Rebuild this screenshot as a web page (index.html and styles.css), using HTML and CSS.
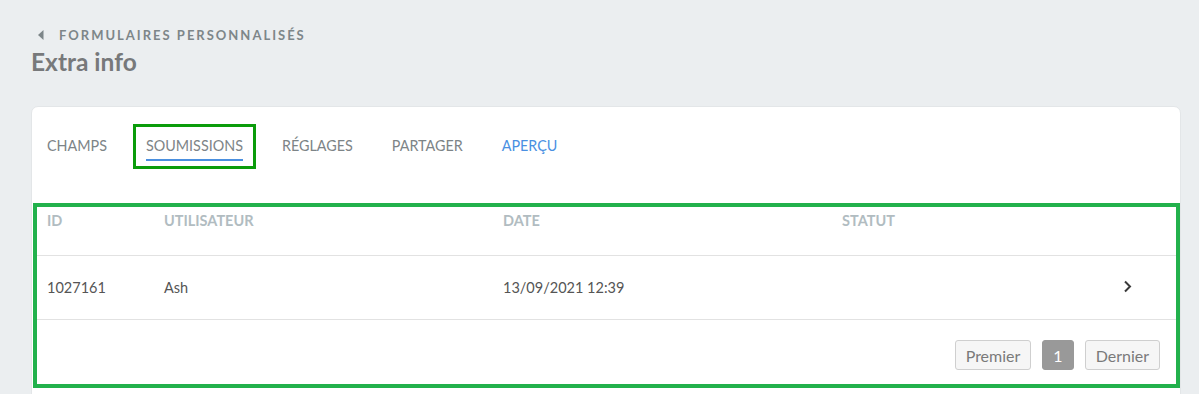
FILE: index.html
```html
<!DOCTYPE html>
<html lang="fr">
<head>
    <meta charset="UTF-8">
    <meta name="viewport" content="width=device-width, initial-scale=1.0">
    <title>Extra info</title>
    <link rel="stylesheet" href="styles.css">
</head>
<body>
    <div class="page">
        <a class="breadcrumb" href="#">
            <svg width="6" height="10" viewBox="0 0 6 10"><path d="M5.5 0 L0 5 L5.5 10 Z" fill="#7d8689"/></svg>
            <span>Formulaires personnalisés</span>
        </a>
        <h1 class="title">Extra info</h1>

        <div class="card">
            <nav class="tabs">
                <a class="tab" href="#">Champs</a>
                <a class="tab tab-active" href="#"><span>Soumissions</span></a>
                <a class="tab" href="#">Réglages</a>
                <a class="tab" href="#">Partager</a>
                <a class="tab tab-link" href="#">Aperçu</a>
            </nav>

            <div class="highlight">
                <table class="submissions">
                    <thead>
                        <tr>
                            <th class="col-id">ID</th>
                            <th class="col-user">Utilisateur</th>
                            <th class="col-date">Date</th>
                            <th>Statut</th>
                            <th class="col-action"></th>
                        </tr>
                    </thead>
                    <tbody>
                        <tr>
                            <td>1027161</td>
                            <td>Ash</td>
                            <td>13/09/2021 12:39</td>
                            <td></td>
                            <td class="col-action">
                                <svg width="9" height="13" viewBox="0 0 9 13"><path d="M2 1.5 L7 6.5 L2 11.5" fill="none" stroke="#3a3a3a" stroke-width="2"/></svg>
                            </td>
                        </tr>
                    </tbody>
                </table>
                <div class="pager">
                    <button class="page-btn">Premier</button>
                    <button class="page-btn page-current">1</button>
                    <button class="page-btn">Dernier</button>
                </div>
            </div>
        </div>
    </div>
</body>
</html>
```

FILE: styles.css
```css
body{
    margin: 0;
    font-family: "Lato", "Open Sans", sans-serif;
    background-color: #ebeef0;
}
.page{
    padding: 26px 18px 0 31px;
}
.breadcrumb{
    display: flex;
    align-items: center;
    gap: 15px;
    padding-left: 7px;
    text-decoration: none;
    color: #7d8689;
    font-size: 13px;
    font-weight: bold;
    letter-spacing: 2px;
    text-transform: uppercase;
    line-height: 18px;
}
.title{
    margin: 3px 0 0 0;
    font-size: 24.5px;
    line-height: 30px;
    color: #77797b;
    font-weight: bold;
}
.card{
    margin-top: 29px;
    background-color: #fff;
    border: 1px solid #e3e6e8;
    border-radius: 7px;
    height: 300px;
}
.tabs{
    display: flex;
    gap: 13px;
    padding: 17px 0 0 2px;
}
.tab{
    display: block;
    padding: 10px 10px 0 10px;
    height: 29px;
    border: 3px solid transparent;
    text-decoration: none;
    color: #7d8487;
    font-size: 14.35px;
    text-transform: uppercase;
    line-height: 17px;
}
.tab-active{
    border-color: #0b9c0b;
}
.tab-active span{
    display: block;
    padding-bottom: 5px;
    border-bottom: 2px solid #4a8fdf;
}
.tab-link{
    color: #4a90e2;
}
.highlight{
    margin: 34px 0 0 1px;
    border: 4px solid #22b14c;
}
.submissions{
    width: 100%;
    border-collapse: collapse;
}
.submissions th{
    text-align: left;
    font-size: 14.5px;
    font-weight: bold;
    text-transform: uppercase;
    color: #b1bcc1;
    padding: 5px 10px 0 10px;
    height: 43px;
    vertical-align: top;
    border-bottom: 1px solid #e2e2e2;
}
.submissions td{
    font-size: 14.5px;
    color: #555;
    padding: 0 10px;
    height: 63px;
    border-bottom: 1px solid #e2e2e2;
}
.col-id{ width: 97px; }
.col-user{ width: 319px; }
.col-date{ width: 319px; }
.col-action{ width: 43px; }
.pager{
    display: flex;
    justify-content: flex-end;
    gap: 11px;
    padding: 20px 16px 14px 0;
}
.page-btn{
    font-family: "Lato", "Open Sans", sans-serif;
    font-size: 16px;
    color: #7a7a7a;
    background-color: #f6f6f6;
    border: 1px solid #cfcfcf;
    border-radius: 3px;
    height: 30px;
    padding: 0 10px;
}
.page-current{
    background-color: #999;
    border-color: #999;
    color: #fff;
}
```
